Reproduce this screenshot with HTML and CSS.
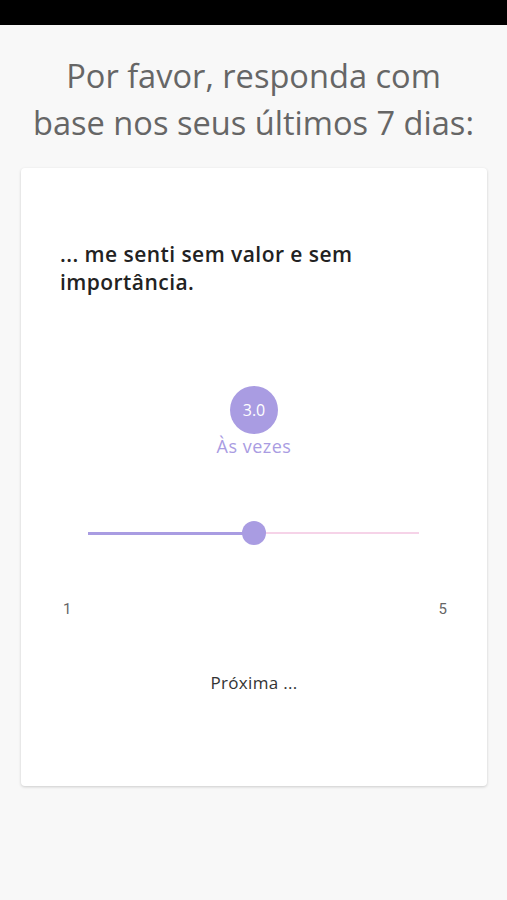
FILE: index.html
```html
<!DOCTYPE html>
<html lang="pt">
<head>
<meta charset="utf-8">
<title>Questionário</title>
<link rel="stylesheet" href="styles.css">
</head>
<body>
<div class="statusbar"></div>
<h1 class="title">Por favor, responda com<br>base nos seus últimos 7 dias:</h1>
<main class="card">
  <p class="question">... me senti sem valor e sem<br>importância.</p>
  <div class="value-bubble">3.0</div>
  <div class="value-label">Às vezes</div>
  <div class="slider">
    <div class="track">
      <div class="track-fill" style="width: 50%"></div>
    </div>
    <div class="thumb" style="left: 50%"></div>
  </div>
  <div class="scale-labels">
    <span>1</span>
    <span>5</span>
  </div>
  <button class="next">Próxima ...</button>
</main>
</body>
</html>
```

FILE: styles.css
```css
* { box-sizing: border-box; }
html, body {
  margin: 0;
  padding: 0;
  background: #f8f8f8;
}
body {
  width: 507px;
  height: 900px;
  overflow: hidden;
  font-family: "Open Sans", "Lato", sans-serif;
}
.statusbar {
  height: 25px;
  background: #000;
}
.title {
  margin: 27px 0 0;
  font-family: "Open Sans", sans-serif;
  font-weight: 400;
  font-size: 32.6px;
  line-height: 47px;
  color: #666;
  text-align: center;
}
.card {
  margin: 22px 20px 0 21px;
  height: 618px;
  background: #fff;
  border-radius: 4px;
  box-shadow: 0 1px 3px rgba(0,0,0,0.18);
  padding-top: 72px;
  display: flex;
  flex-direction: column;
}
.question {
  margin: 0 0 0 39px;
  font-family: "Open Sans", sans-serif;
  font-weight: 600;
  font-size: 21px;
  line-height: 28px;
  color: #222;
  letter-spacing: 0.45px;
}
.value-bubble {
  align-self: center;
  margin-top: 90px;
  width: 48px;
  height: 48px;
  border-radius: 50%;
  background: #a99ce2;
  color: #fff;
  font-family: "Open Sans", sans-serif;
  font-size: 16px;
  display: flex;
  align-items: center;
  justify-content: center;
}
.value-label {
  text-align: center;
  font-family: "Open Sans", sans-serif;
  font-size: 18px;
  letter-spacing: 0.5px;
  line-height: 24px;
  color: #a99ce2;
}
.slider {
  position: relative;
  margin: 63px 68px 0 67px;
  height: 24px;
  display: flex;
  align-items: center;
}
.track {
  width: 100%;
  height: 2px;
  background: #f6d3e8;
}
.track-fill {
  height: 3px;
  margin-top: -0.5px;
  background: #a99ce2;
}
.thumb {
  position: absolute;
  top: 0;
  width: 24px;
  height: 24px;
  margin-left: -12px;
  border-radius: 50%;
  background: #a99ce2;
}
.scale-labels {
  margin: 54px 40px 0 42px;
  display: flex;
  justify-content: space-between;
  font-family: "Roboto", sans-serif;
  font-size: 15px;
  line-height: 20px;
  color: #666;
}
.next {
  align-self: center;
  margin-top: 54px;
  padding: 0;
  border: none;
  background: none;
  font-family: "Open Sans", sans-serif;
  font-size: 17px;
  letter-spacing: 0.3px;
  line-height: 20px;
  color: #333;
}
```
